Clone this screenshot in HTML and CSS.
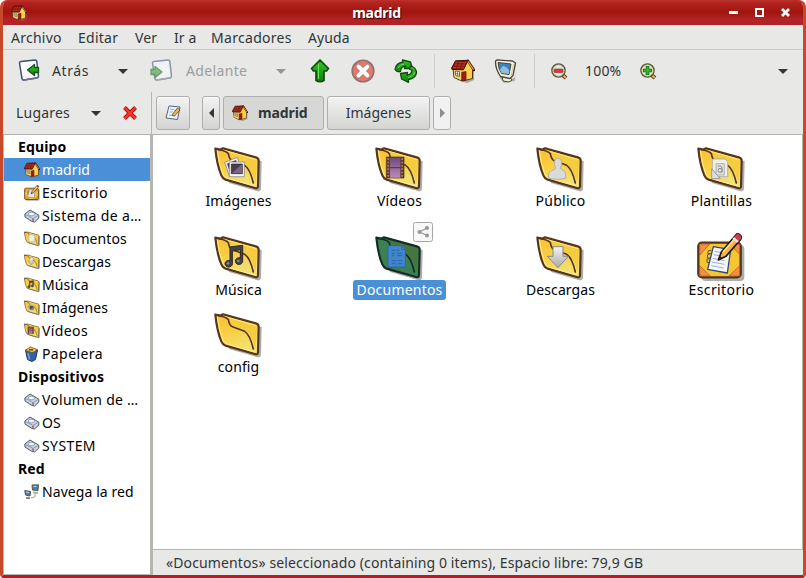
FILE: index.html
```
<!DOCTYPE html>
<html lang="es">
<head>
<meta charset="utf-8">
<title>madrid</title>
<link rel="stylesheet" href="styles.css">
</head>
<body>
<svg class="defs" aria-hidden="true">
  <defs>
    <linearGradient id="gold" x1="0" y1="0" x2="0.35" y2="1"><stop offset="0" stop-color="#fbc02d"/><stop offset=".5" stop-color="#f8cf45"/><stop offset="1" stop-color="#f2e276"/></linearGradient>
    <linearGradient id="purple" x1="0" y1="0" x2="0" y2="1"><stop offset="0" stop-color="#6f4a78"/><stop offset="1" stop-color="#b88abf"/></linearGradient>
    <linearGradient id="silver" x1="0" y1="0" x2="0" y2="1"><stop offset="0" stop-color="#f4f4f4"/><stop offset="1" stop-color="#aaa"/></linearGradient>
    <linearGradient id="leaf" x1="0" y1="0" x2="0" y2="1"><stop offset="0" stop-color="#35c428"/><stop offset="1" stop-color="#0f8212"/></linearGradient>
  </defs>
  <symbol id="folder" viewBox="0 0 144 135">
    <path d="M15 15L143 42L141 127Q138 136 128 132L45 108Z" fill="#777" opacity=".6"/>
    <path d="M4 5L18 8L27 4L128 32Q134 34 134 41L132 118Q131 126 123 123L35 98Q26 95 22 85Q9 55 4 5Z" fill="url(#gold)" stroke="#56351f" stroke-width="6.500" stroke-linejoin="round"/>
    <path d="M24 9L46 16Q50 20 50 33L58 38L94 51Q112 62 125 108L128 38Z" fill="#f5cc3d"/>
    <path d="M10 10Q14 50 27 82Q31 91 38 93L122 117" fill="none" stroke="#fff08a" stroke-width="3"/>
    <path d="M28 9L127 38" fill="none" stroke="#ffe978" stroke-width="3"/>
    <path d="M6 6Q38 12 43 20Q46 38 55 41L92 55Q108 65 118 108" fill="none" stroke="#56351f" stroke-width="5" stroke-linecap="round"/>
  </symbol>
  <symbol id="folder-green" viewBox="0 0 144 135">
    <path d="M15 15L143 42L141 127Q138 136 128 132L45 108Z" fill="#777" opacity=".6"/>
    <path d="M4 5L18 8L27 4L128 32Q134 34 134 41L132 118Q131 126 123 123L35 98Q26 95 22 85Q9 55 4 5Z" fill="#3b8050" stroke="#132c29" stroke-width="6.500" stroke-linejoin="round"/>
    <path d="M24 9L46 16Q50 20 50 33L58 38L94 51Q112 62 125 108L128 38Z" fill="#47763c"/>
    <path d="M6 6Q38 12 43 20Q46 38 55 41L92 55Q108 65 118 108" fill="none" stroke="#132c29" stroke-width="5" stroke-linecap="round"/>
  </symbol>
  <symbol id="e-photo" viewBox="0 0 144 135">
    <path d="M32 46L70 31L84 70L46 86Z" fill="#eee" stroke="#777" stroke-width="2"/><path d="M39 50L66 39L76 68L49 79Z" fill="#463a4c"/>
    <path d="M46 45H91V89H46Z" fill="#f6f6f6" stroke="#777" stroke-width="2"/><path d="M52 51H85V80H52Z" fill="#4a3b50" stroke="#222" stroke-width="2"/><path d="M53 79L84 52V79Z" fill="#7c6485"/>
  </symbol>
  <symbol id="e-film" viewBox="0 0 144 135">
    <path d="M34 30H87V93H34Z" fill="#5d3d37" stroke="#4a2e28" stroke-width="2"/><path d="M45 32H76V60H45ZM45 64H76V92H45Z" fill="url(#purple)"/>
    <path d="M39.500 34V92M81.500 34V92" stroke="#b77a5f" stroke-width="5" stroke-dasharray="5 5"/>
  </symbol>
  <symbol id="e-user" viewBox="0 0 144 135">
    <path d="M38 94Q34 72 54 68L59 64Q54 50 55 44Q57 34 66 34Q76 34 77 45Q77 56 73 64L78 68Q92 72 89 94Q64 101 38 94Z" fill="#dadada" stroke="#aaa" stroke-width="2.500"/>
  </symbol>
  <symbol id="e-tpl" viewBox="0 0 144 135">
    <path d="M46 36H84L92 44V89H46Z" fill="#eee" stroke="#aaa" stroke-width="2.500"/><path d="M57 50H82V84H57Z" fill="#e2e2e2" stroke="#999" stroke-width="2"/>
    <circle cx="69" cy="70" r="6" fill="none" stroke="#888" stroke-width="3"/><path d="M62 58Q75 54 75 64V77" fill="none" stroke="#888" stroke-width="3"/><path d="M44 65L70 95H44Z" fill="#ddd" stroke="#999" stroke-width="3"/>
  </symbol>
  <symbol id="e-page" viewBox="0 0 144 135"><path d="M44 30H82L96 44V92H44Z" fill="#eee" stroke="#aaa" stroke-width="5"/></symbol>
  <symbol id="e-note" viewBox="0 0 144 135">
    <path d="M48 33L86 28V76A11 10 0 1 1 79 66V41L55 45V84A11 10 0 1 1 48 74Z" fill="#444" stroke="#262626" stroke-width="3"/><circle cx="42" cy="82" r="4" fill="#888"/><circle cx="73" cy="75" r="4" fill="#888"/>
  </symbol>
  <symbol id="e-doc" viewBox="0 0 144 135">
    <path d="M39 29H81L91 39V93H39Z" fill="#4186cb" stroke="#285f9b" stroke-width="2"/><path d="M80 29V40H91M50 43H62M66 43H73M50 52H60M66 52H82M50 59H58M66 59H82M50 74H64M68 74H82M50 83H62M68 83H82" fill="none" stroke="#2c66a6" stroke-width="3"/>
  </symbol>
  <symbol id="e-down" viewBox="0 0 144 135">
    <path d="M51 32H81V61H97L66 95L34 61H51Z" fill="url(#silver)" stroke="#888" stroke-width="3"/>
  </symbol>
  <symbol id="desk" viewBox="0 0 144 147">
    <rect x="14" y="36" width="128" height="108" rx="12" fill="#777" opacity=".6"/>
    <rect x="4" y="29" width="127" height="104" rx="11" fill="#f7c52f" stroke="#4f3220" stroke-width="7"/>
    <path d="M8 33H38L8 67ZM98 33H128V64ZM8 98L40 129H8ZM128 98L96 129H128Z" fill="#f78d3f" stroke="#9b5b22" stroke-width="2"/>
    <path d="M49 41L101 50L91 120L32 109Z" fill="#f3f7fc" stroke="#334d70" stroke-width="4" stroke-linejoin="round"/>
    <path d="M53 55L80 60M50 65L72 69M47 76L83 83M45 87L82 94M43 98L80 105" stroke="#9daecb" stroke-width="3"/><path d="M43 52L34 53L32 61L41 62L32 65L31 74L39 76L30 78V88L37 89" fill="none" stroke="#555" stroke-width="3"/>
    <path d="M64 81L73 57L117 5Q121 0 128 5L132 9Q134 14 131 19L87 70Z" fill="#f5b544" stroke="#201812" stroke-width="5" stroke-linejoin="round"/><path d="M111 12L117 5Q121 0 128 5L132 9Q134 14 131 19L124 26Z" fill="#c83d4b"/><path d="M106 18L120 30L125 24L111 12Z" fill="#e3e3e3"/><path d="M64 81L69 69L77 76Z" fill="#222"/><path d="M78 57L110 21" stroke="#ffe39b" stroke-width="4"/>
  </symbol>
  <symbol id="home" viewBox="0 0 24 24">
    <path d="M4 13L6 21L16 24L23 21V11Z" fill="#777" opacity=".6"/>
    <path d="M2 9L3 18.500L11.500 22L21.500 19.500V10L17 3Z" fill="#f1b633" stroke="#563019" stroke-width="1" stroke-linejoin="round"/>
    <path d="M10 11V21L3.500 18.300L2.700 10Z" fill="#f3d576"/>
    <path d="M16.500 4L21 10.500L20.800 19L12 21.300L12.500 11Z" fill="#fbd04b"/>
    <path d="M10.800 13.500L15 12.500V21L10.800 21.800Z" fill="#a71b16" stroke="#501008" stroke-width=".7"/>
    <path d="M4.200 12L8.500 12.500V17.500L4.700 16.500Z" fill="#eef7fa" stroke="#5c4d31" stroke-width=".8"/><path d="M6.500 12.500V17M4.500 14.500L8.500 15" stroke="#5c4d31" stroke-width=".6"/>
    <path d="M.6 9L4.500 1.800L17 1.300L12.500 10.700L1 10.500Z" fill="#8c1712" stroke="#43100a" stroke-width="1" stroke-linejoin="round"/>
    <path d="M2 8.500L13 8.800M3.200 6L14 6.200M4.600 3.700L15.500 3.700" stroke="#d2582d" stroke-width=".7"/><path d="M8 2L5 10M12 2L9 10" stroke="#5a0e0a" stroke-width=".6"/>
    <path d="M17 1.800L23 11" stroke="#43100a" stroke-width="2.400" stroke-linecap="round"/><path d="M17 2.300L22.500 10.700" stroke="#eda43a" stroke-width="1.200"/>
  </symbol>
  <symbol id="monitor" viewBox="0 0 24 24">
    <path d="M5 18L18 20L21 18L22 7L21 22L10 24Z" fill="#888" opacity=".6"/><path d="M8 17L16 18L18 21L15 23L9 22Z" fill="#f5efd7" stroke="#4b473c"/>
    <path d="M3 .8L18.500 2L21.500 4L19 16.500L16 19.500L6.500 17.500Q1.500 10 1.500 3Q1.500 1 3 .8Z" fill="#f6f0db" stroke="#47443b" stroke-width="1.300" stroke-linejoin="round"/>
    <path d="M4 3.500L17 5L15 15.500L7.500 14.500Q4.500 10 4 3.500Z" fill="#3b83bd" stroke="#47443b"/><path d="M6 11Q9 5 11 8Q13 8 15.500 12L14.700 15L7.500 14Z" fill="#8fbde2"/><path d="M19.700 5L17 17" stroke="#d0c7a6"/>
  </symbol>
  <symbol id="pane" viewBox="0 0 24 24"><path d="M1.500 4Q1.500 2.800 3 2.600L17 .9Q18.600 .8 18.800 2.300L20.500 17Q20.500 18.500 19 18.900L6 21Q4.500 21.200 4 19.800Z" fill="#fafcff" stroke="#3c4e7e" stroke-width="1.500" stroke-linejoin="round"/><path d="M4.500 21.300L20.500 18.500" stroke="#66738e" stroke-width="1.500"/></symbol>
  <symbol id="arrow" viewBox="0 0 24 24"><path d="M1 12L8 6.500V9.500H12V14.500H8V17.500Z" fill="url(#leaf)" stroke="#14500f" stroke-width="1.300" stroke-linejoin="round"/></symbol>
  <symbol id="drive" viewBox="0 0 16 16"><path d="M.8 6L6 2L14.800 7.200V10L10.500 14L8 13.500L1 9Z" fill="#cbd4e3" stroke="#4d596e" stroke-linejoin="round"/><path d="M1.500 6.500L9 10.500L14 7.500M9 10.500L9.500 13" fill="none" stroke="#79869b" stroke-width=".8"/><ellipse cx="7.500" cy="6" rx="3.200" ry="1.800" fill="#f4f8ff" stroke="#73839e" stroke-width=".7"/><path d="M8 11.800h1.800" stroke="#d74234" stroke-width="1.300"/></symbol>
  <symbol id="trash" viewBox="0 0 16 16"><path d="M1.500 4L3.500 13.500L8 15.500L11.500 13.500L13.500 4Z" fill="#2d64a8" stroke="#1f3659"/><path d="M4 7L5.500 13.500" stroke="#76a3d8" stroke-width="1.500"/><path d="M1 4.500L4 2.500L6.500 .8L9 2L13.500 3.500L10 6L7.500 6.500L5 5.500Z" fill="#efc45b" stroke="#6e4b1a" stroke-width=".8"/><path d="M5 3.800H9" stroke="#5d4a2a" stroke-width="1.500"/></symbol>
  <symbol id="network" viewBox="0 0 16 16"><path d="M8 1L14.500 .8L14 6.500L8.500 6Z" fill="#4286b9" stroke="#55544c"/><path d="M9 8.500L14 9" stroke="#b5ae98" stroke-width="2"/><path d="M.8 6.500L6.500 7.500L6 12L1.500 11Z" fill="#4286b9" stroke="#55544c"/><path d="M2 14H6" stroke="#8e8a7c" stroke-width="2"/><path d="M7 13.500Q12 14 11 10" fill="none" stroke="#aaa" stroke-width="1.200"/><path d="M9.500 2.500L12.500 2.300M2 8L5 8.500" stroke="#b1d8ef"/></symbol>
  <symbol id="lens" viewBox="0 0 17 17"><path d="M11 11.500L15 15" stroke="#5d401e" stroke-width="4"/><path d="M12 12.200L14.700 14.700" stroke="#f3b45b" stroke-width="2"/><circle cx="7.500" cy="7.500" r="6.500" fill="#d8ebf7" stroke="#55553e" stroke-width="1.600"/><circle cx="7.500" cy="7.500" r="5.500" fill="none" stroke="#dfcf7b" stroke-width="1"/></symbol>
</svg>

<div class="window">
  <header class="titlebar">
    <svg class="i16 title-icon"><use href="#home"/></svg>
    <h1>madrid</h1>
    <div class="controls">
      <svg width="9" height="9"><path d="M0 4.500H9" stroke="#fff" stroke-width="3"/></svg>
      <svg width="9" height="9"><path d="M1 1H8V8H1Z" fill="none" stroke="#fff" stroke-width="2"/></svg>
      <svg width="9" height="9"><path d="M1 1L8 8M8 1L1 8" stroke="#fff" stroke-width="2.800"/></svg>
    </div>
  </header>
  <nav class="menubar"><span class="m1">Archivo</span><span class="m2">Editar</span><span class="m3">Ver</span><span class="m4">Ir a</span><span class="m5">Marcadores</span><span class="m6">Ayuda</span></nav>
  <div class="toolbar">
    <svg class="i24 back"><use href="#pane"/><g transform="translate(8.500 -1)"><use href="#arrow" width="24" height="24"/></g></svg>
    <span class="t-back">Atrás</span><i class="down"></i>
    <svg class="i24 fwd"><use href="#pane" x="1"/><g transform="translate(13 1) scale(-1 1)"><use href="#arrow" width="24" height="24"/></g></svg>
    <span class="t-fwd">Adelante</span><i class="down dim"></i>
    <svg class="i24 up"><path d="M12 1L20.500 9.500L18.500 12H16V21.500Q12 24 8 21.500V12H5.500L3.500 9.500Z" fill="url(#leaf)" stroke="#15480f" stroke-width="1.700" stroke-linejoin="round"/><path d="M10.500 5V20" stroke="#67e252"/></svg>
    <svg class="i24 stop"><circle cx="12" cy="12" r="10.800" fill="#ee7468" stroke="#8c7370" stroke-width="1.600"/><path d="M7.500 7.500L16.500 16.500M16.500 7.500L7.500 16.500" stroke="#a77d79" stroke-width="5.500" stroke-linecap="round"/><path d="M7.500 7.500L16.500 16.500M16.500 7.500L7.500 16.500" stroke="#fff" stroke-width="4" stroke-linecap="round"/></svg>
    <svg class="i24 reload"><g fill="url(#leaf)" stroke="#15480f" stroke-width="1.300" stroke-linejoin="round"><path d="M1 10.500Q2 4 9 3L8.500 .8L16.500 3L18.500 9.500L10.500 9.500L11.500 7.200Q7 7.500 6.500 12.500Q3 13.500 1 10.500Z"/><path d="M17 7Q22.500 9 22.500 14Q21.500 19.500 14.500 20.500L14.500 23.300L7.500 20L6.500 14.500L13.500 13.500L13 16Q17.500 15.500 18 11.500L15.500 10Z"/></g><path d="M4 9Q6 5 10 5M20.500 13Q20 17 14 18.500" fill="none" stroke="#6be058"/></svg>
    <i class="rule r1"></i>
    <svg class="i24 house"><use href="#home"/></svg>
    <svg class="i24 computer"><use href="#monitor"/></svg>
    <i class="rule r2"></i>
    <svg class="i17 zoom-out"><use href="#lens"/><rect x="3" y="6" width="9" height="3.500" rx="1" fill="#e33631" stroke="#a51d1c" stroke-width=".6"/></svg>
    <span class="percent">100%</span>
    <svg class="i17 zoom-in"><use href="#lens"/><path d="M7.500 3V12M3 7.500H12" stroke="#156f18" stroke-width="3.600"/><path d="M7.500 3.700V11.300M3.700 7.500H11.300" stroke="#37b72d" stroke-width="2"/></svg>
    <i class="down last"></i>
  </div>
  <div class="locations">
    <div class="side-head"><span>Lugares</span><i class="down"></i><svg width="14" height="14"><path d="M1.500 1.500L12.500 12.500M12.500 1.500L1.500 12.500" stroke="#a90e0e" stroke-width="4"/><path d="M1.500 1.500L12.500 12.500M12.500 1.500L1.500 12.500" stroke="#f8382e" stroke-width="2.300"/></svg></div>
    <div class="path-head">
      <button class="btn edit"><svg width="16" height="16"><path d="M4 1L15 2L12.500 14.500L1 13Z" fill="#edf4fc" stroke="#52647c"/><path d="M5 4L10 5M4.500 7H8M4 10L10 11" stroke="#9aabc3"/><path d="M7 10L12.500 3L15 5L9.500 11Z" fill="#efb74e" stroke="#61461d" stroke-width=".8"/></svg></button>
      <button class="btn prev"><i class="left"></i></button>
      <button class="btn current"><svg class="i16"><use href="#home"/></svg><b>madrid</b></button>
      <button class="btn images"><span>Imágenes</span></button>
      <button class="btn next"><i class="right"></i></button>
    </div>
  </div>
  <main class="content">
    <aside class="places">
      <h2>Equipo</h2>
      <div class="row on"><svg class="i16"><use href="#home"/></svg><span>madrid</span></div>
      <div class="row"><svg class="i16"><use href="#desk"/></svg><span class="wide">Escritorio</span></div>
      <div class="row"><svg class="i16"><use href="#drive"/></svg><span class="wide">Sistema de a…</span></div>
      <div class="row"><svg class="i16"><use href="#folder"/><use href="#e-page"/></svg><span>Documentos</span></div>
      <div class="row"><svg class="i16"><use href="#folder"/><use href="#e-down"/></svg><span>Descargas</span></div>
      <div class="row"><svg class="i16"><use href="#folder"/><use href="#e-note"/></svg><span>Música</span></div>
      <div class="row"><svg class="i16"><use href="#folder"/><use href="#e-photo"/></svg><span>Imágenes</span></div>
      <div class="row"><svg class="i16"><use href="#folder"/><use href="#e-film"/></svg><span class="wide">Vídeos</span></div>
      <div class="row"><svg class="i16"><use href="#trash"/></svg><span class="wide">Papelera</span></div>
      <h2>Dispositivos</h2>
      <div class="row"><svg class="i16"><use href="#drive"/></svg><span class="snug">Volumen de …</span></div>
      <div class="row"><svg class="i16"><use href="#drive"/></svg><span>OS</span></div>
      <div class="row"><svg class="i16"><use href="#drive"/></svg><span class="wide">SYSTEM</span></div>
      <h2>Red</h2>
      <div class="row"><svg class="i16"><use href="#network"/></svg><span>Navega la red</span></div>
    </aside>
    <section class="files">
      <div class="grid">
        <figure><svg class="f"><use href="#folder"/><use href="#e-photo"/></svg><figcaption>Imágenes</figcaption></figure>
        <figure><svg class="f"><use href="#folder"/><use href="#e-film"/></svg><figcaption class="snug">Vídeos</figcaption></figure>
        <figure><svg class="f"><use href="#folder"/><use href="#e-user"/></svg><figcaption class="snug">Público</figcaption></figure>
        <figure><svg class="f"><use href="#folder"/><use href="#e-tpl"/></svg><figcaption class="snug">Plantillas</figcaption></figure>
        <figure><svg class="f"><use href="#folder"/><use href="#e-note"/></svg><figcaption>Música</figcaption></figure>
        <figure class="selected"><svg class="f"><use href="#folder-green"/><use href="#e-doc"/></svg><figcaption>Documentos</figcaption><svg class="share" width="20" height="20"><rect x=".5" y=".5" width="19" height="19" rx="2" fill="#f8f8f8" stroke="#a6a6a6"/><path d="M14 6L6.500 10L14 13.500" fill="none" stroke="#999" stroke-width="1.300"/><circle cx="14" cy="6" r="2" fill="#999"/><circle cx="6.500" cy="10" r="2" fill="#999"/><circle cx="14" cy="13.500" r="2" fill="#999"/></svg></figure>
        <figure><svg class="f"><use href="#folder"/><use href="#e-down"/></svg><figcaption>Descargas</figcaption></figure>
        <figure><svg class="f d"><use href="#desk"/></svg><figcaption class="wide">Escritorio</figcaption></figure>
        <figure><svg class="f"><use href="#folder"/></svg><figcaption>config</figcaption></figure>
      </div>
      <footer><span>«Documentos» seleccionado (containing 0 items), Espacio libre: 79,9 GB</span></footer>
    </section>
  </main>
</div>
</body>
</html>
```
FILE: styles.css
```
* { box-sizing: border-box; }
body { margin: 0; background: #fff; color: #303638; font: 14px/20px "Noto Sans", "Open Sans", sans-serif; letter-spacing: .08px; }
.defs { position: absolute; width: 0; height: 0; }
svg { display: block; flex: none; }
i, span { flex: none; }
span { white-space: nowrap; }
.window { width: 806px; height: 578px; display: flex; flex-direction: column; overflow: hidden; border-radius: 7px 7px 4px 4px; background: #e8e8e6; border: solid #c8482a; border-width: 0 3px 3px; border-bottom-color: #ae2026; }
.titlebar { height: 25px; margin: 0 -3px; flex: none; display: grid; grid-template-columns: 80px 1fr 80px; align-items: center; background: linear-gradient(#b9332a 0, #b32220 3px, #a1170f 11px, #a1170f 13px, #b32226 19px, #b32226); }
.title-icon { margin-left: 11px; }
h1 { margin: 0; padding-right: 53px; text-align: center; color: #fff; font-size: 14px; line-height: 25px; letter-spacing: -.25px; text-shadow: 1px 1px 1px #300; }
.controls { display: flex; gap: 17px; margin-left: 3px; }
.menubar { height: 25px; flex: none; display: flex; align-items: center; padding: 1px 0 0 8px; border-bottom: 1px solid #ccccca; }
.m1 { width: 67px; letter-spacing: .25px; } .m2 { width: 57px; letter-spacing: .25px; } .m3 { width: 39px; } .m4 { width: 37px; } .m5 { width: 97px; letter-spacing: .3px; }
.i24 { width: 24px; height: 24px; }
.i16 { width: 16px; height: 16px; }
.i17 { width: 17px; height: 17px; }
.toolbar { height: 42px; flex: none; display: flex; align-items: center; }
.down { width: 0; height: 0; border: 5px solid transparent; border-top-color: #30373a; border-bottom: 0; }
.dim { border-top-color: #929694; }
.back { margin-left: 15px; overflow: visible; }
.t-back { margin-left: 10px; width: 66px; letter-spacing: .6px; }
.fwd { margin-left: 22px; opacity: .55; }
.t-fwd { margin-left: 12px; width: 90px; color: #9b9e9d; letter-spacing: .35px; }
.up { margin-left: 22px; }
.stop { margin-left: 19px; }
.reload { margin-left: 19px; }
.rule { width: 1px; height: 34px; background: #ccccca; }
.r1 { margin-left: 16px; }
.house { margin-left: 16px; }
.computer { margin-left: 19px; }
.r2 { margin-left: 16px; }
.zoom-out { margin-left: 16px; }
.percent { margin-left: 17px; width: 55px; letter-spacing: .2px; }
.last { margin-left: auto; margin-right: 15px; }
.locations { height: 43px; flex: none; display: flex; border-bottom: 1px solid #b3b4af; }
.side-head { width: 149px; flex: none; display: flex; align-items: center; padding-left: 13px; border-right: 1px solid #b5b6b0; }
.side-head span { width: 75px; letter-spacing: .2px; }
.side-head svg { margin-left: 22px; }
.path-head { display: flex; padding: 4px 0 4px 4px; }
.btn { height: 34px; flex: none; padding: 0; display: flex; align-items: center; justify-content: center; border: 1px solid #aeafac; border-radius: 3px; background: linear-gradient(#f3f3f3, #d4d4d3); box-shadow: inset 0 1px #fafafa; color: inherit; font: inherit; }
.edit { width: 34px; margin-right: 12px; }
.prev { width: 18px; margin-right: 3px; }
.current { width: 101px; margin-right: 3px; padding-left: 8px; gap: 10px; justify-content: flex-start; background: #d7d7d5; box-shadow: none; }
.current b { letter-spacing: -.1px; }
.images { width: 103px; margin-right: 3px; }
.next { width: 18px; background: #f1f1f2; }
.left, .right { width: 0; height: 0; border: 5px solid transparent; }
.left { border-right-color: #30373a; border-left: 0; }
.right { border-left-color: #8b8f8d; border-right: 0; }
.content { flex: 1; min-height: 0; display: flex; color: #000; }
.places { width: 150px; flex: none; background: #fff; border-left: 1px solid #b9bab5; border-right: 3px solid #b5b6b0; border-bottom: 1px solid #b5b6b0; }
h2 { margin: 0; height: 23px; padding-left: 14px; font-size: 14px; line-height: 23px; letter-spacing: .15px; }
.row { height: 23px; display: flex; align-items: center; gap: 2px; padding-left: 20px; }
.wide { letter-spacing: .4px; }
.snug { letter-spacing: .25px; }
.on { background: #4a90d9; color: #fff; }
.files { flex: 1; display: flex; flex-direction: column; }
.grid { flex: 1; background: #fff; border-right: 1px solid #b5b6b0; border-bottom: 1px solid #b5b6b0; display: grid; grid-template-columns: repeat(4, 161px); grid-template-rows: 76px 89px 77px; padding-left: 5px; }
figure { margin: 0; position: relative; display: flex; flex-direction: column; align-items: center; justify-content: flex-end; }
.f { width: 48px; height: 45px; margin: 0 2px -1px 0; }
.d { height: 49px; margin-bottom: -2px; }
figcaption { height: 20px; padding: 0 4px; border-radius: 3px; line-height: 20px; }
.selected figcaption { background: #4a90d9; color: #fff; letter-spacing: .2px; }
.share { position: absolute; left: 94px; top: 11px; }
footer { height: 25px; flex: none; padding-left: 13px; line-height: 26px; color: #303638; letter-spacing: .12px; }
```
